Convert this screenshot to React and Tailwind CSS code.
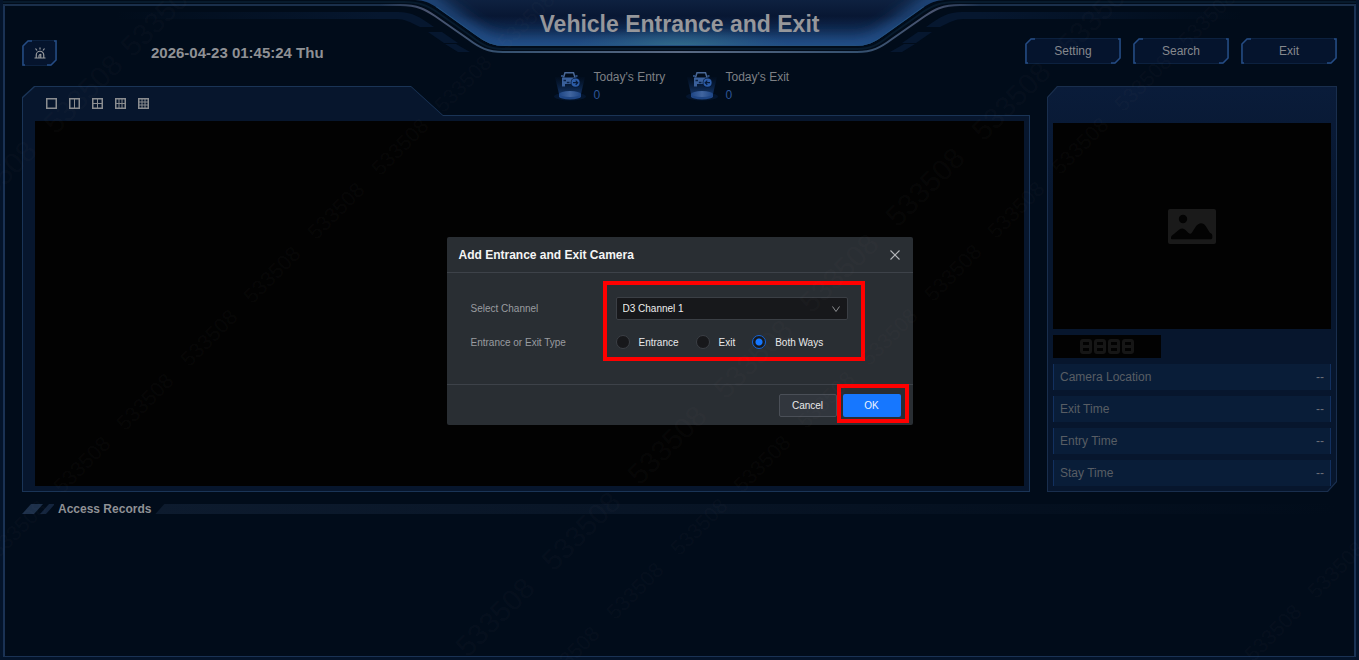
import React from "react";

const SMALL_MARKS = [
  [18, 529], [82, 465], [145, 402], [209, 338], [272, 275], [336, 211], [400, 147], [463, 84], [526, 21],
  [571, 655], [635, 591], [699, 527], [762, 464], [826, 400], [889, 337], [953, 273], [1016, 210], [1080, 146], [1143, 83], [1207, 19],
  [1273, 633], [1336, 570],
];
const LARGE_MARKS = [
  [-3, 180], [83, 94], [160, 17],
  [495, 617], [581, 531], [667, 445], [753, 359], [839, 273], [925, 187], [1011, 101], [1097, 15],
];

function Watermark() {
  return (
    <svg
      aria-hidden="true"
      className="pointer-events-none absolute inset-0 z-30 h-full w-full"
      viewBox="0 0 1359 660"
      preserveAspectRatio="xMidYMid slice"
      fill="#8a8a8a"
      fillOpacity="0.05"
      fontFamily="Liberation Sans, Arial, sans-serif"
      textAnchor="middle"
    >
      {SMALL_MARKS.map(([x, y]) => (
        <text key={`${x}-${y}`} fontSize="21" dy="7" transform={`translate(${x} ${y}) rotate(-45)`}>533508</text>
      ))}
      {LARGE_MARKS.map(([x, y]) => (
        <text key={`${x}-${y}`} fontSize="29" dy="10" transform={`translate(${x} ${y}) rotate(-45)`}>533508</text>
      ))}
    </svg>
  );
}

const GLOW_PATH =
  "M415 0C424 0 430 3 436 7L474 34C486 43 494 46 505 46H855C866 46 874 43 886 34L924 7C930 3 936 0 945 0Z";
const DASHES = (
  <g fill="#06172f">
    <path d="M380 12H398C412 12 420 17 434 27H420C410 22 405 19 396 19H380Z" />
    <path d="M428 32H442L458 43H444Z" />
    <path d="M445 44H456L470 52H458Z" />
  </g>
);

function HeaderBackdrop() {
  return (
    <div aria-hidden="true" className="absolute inset-x-0 top-0 flex">
      <div className="flex-1 pt-px pl-[3px]">
        <div className="h-[2px] bg-[#071a2c]" />
        <div className="mt-px h-[2px] bg-[#1a2f4b]" />
        <div className="mt-[6px] h-[7px] bg-linear-to-r from-transparent from-30% to-[#06172f]" />
      </div>
      <svg className="h-[60px] w-[600px] shrink-0" viewBox="380 0 600 60">
        <defs>
          <clipPath id="plate"><path d={GLOW_PATH} /></clipPath>
          <linearGradient id="plateFill" x1="0" y1="0" x2="0" y2="1">
            <stop offset="0" stopColor="#0e2140" />
            <stop offset="0.35" stopColor="#081733" />
            <stop offset="1" stopColor="#163a6c" />
          </linearGradient>
          <radialGradient id="teal">
            <stop offset="0" stopColor="#34708a" />
            <stop offset="1" stopColor="#2a5d80" stopOpacity="0" />
          </radialGradient>
          <linearGradient id="rim" x1="380" x2="980" y1="0" y2="0" gradientUnits="userSpaceOnUse">
            <stop offset="0" stopColor="#1a2f4b" />
            <stop offset="0.08" stopColor="#4a5470" />
            <stop offset="0.2" stopColor="#34506f" />
            <stop offset="0.5" stopColor="#5a6a83" />
            <stop offset="0.8" stopColor="#34506f" />
            <stop offset="0.92" stopColor="#4a5470" />
            <stop offset="1" stopColor="#1a2f4b" />
          </linearGradient>
          <filter id="soft" x="-20%" y="-60%" width="140%" height="220%"><feGaussianBlur stdDeviation="8" /></filter>
        </defs>
        <path d={GLOW_PATH} fill="url(#plateFill)" />
        <g clipPath="url(#plate)">
          <path d="M400 -8L424 -2L474 34C486 43 494 46 505 46H855C866 46 874 43 886 34L936 -2L960 -8" fill="none" stroke="#2c5d9e" strokeOpacity="0.85" strokeWidth="14" filter="url(#soft)" />
          <ellipse cx="680" cy="48" rx="110" ry="22" fill="url(#teal)" />
          <path d="M436 7L474 34C486 43 494 46 505 46H855C866 46 874 43 886 34L924 7" fill="none" stroke="#24507f" strokeWidth="2" />
        </g>
        <path d="M380 2H404C420 2 428 6 437 12L471 36C482 45 490 49 503 49H857C870 49 878 45 889 36L923 12C932 6 940 2 956 2H980" fill="none" stroke="#071a2c" strokeWidth="2" />
        <path d="M380 5H400C418 5 426 10 435 16L468 39C480 48 488 52 503 52H857C872 52 880 48 892 39L925 16C934 10 942 5 960 5H980" fill="none" stroke="url(#rim)" strokeWidth="2" />
        {DASHES}
        <g transform="translate(1360 0) scale(-1 1)">{DASHES}</g>
      </svg>
      <div className="flex-1 pt-px pr-[3px]">
        <div className="h-[2px] bg-[#071a2c]" />
        <div className="mt-px h-[2px] bg-[#1a2f4b]" />
        <div className="mt-[6px] h-[7px] bg-linear-to-l from-transparent from-30% to-[#06172f]" />
      </div>
    </div>
  );
}

function ChamferFrame({ w }) {
  return (
    <svg aria-hidden="true" className="absolute inset-0 h-full w-full" viewBox={`0 0 ${w} 26`} fill="none">
      <path d={`M6.5 .5H${w - 0.5}V20L${w - 6} 25.5H.5V6Z`} fill="#05142d" stroke="#0c213f" />
      <path d={`M10 1H6L1 6V25H3M${w - 3} 1H${w - 1}V20L${w - 6} 25H${w - 10}`} stroke="#254c84" strokeWidth="1.5" />
    </svg>
  );
}

function TopButton({ children }) {
  return (
    <button type="button" className="relative h-[26px] w-24 text-xs text-[#85888d]">
      <ChamferFrame w={96} />
      <span className="relative">{children}</span>
    </button>
  );
}

function SirenIcon() {
  return (
    <svg aria-hidden="true" className="relative h-3 w-3" viewBox="0 0 24 24" fill="none" stroke="#999b9e" strokeWidth="2.4">
      <path d="M1 22H23M4.5 21V16A7.5 7.5 0 0 1 19.5 16V21M10 21V18A3 3 0 0 1 13.5 15V21M12 1V5M3 3L6 7M21 3L18 7" />
    </svg>
  );
}

function StatIcon({ out }) {
  const id = out ? "out" : "in";
  return (
    <svg aria-hidden="true" className="h-9 w-8 shrink-0" viewBox="0 0 32 36">
      <defs>
        <linearGradient id={`beam-${id}`} x1="0" y1="0" x2="0" y2="1">
          <stop offset="0" stopColor="#0e2d5c" stopOpacity="0.05" />
          <stop offset="1" stopColor="#1b4587" stopOpacity="0.7" />
        </linearGradient>
        <linearGradient id={`disc-${id}`} x1="0" x2="1">
          <stop offset="0" stopColor="#1d4585" />
          <stop offset="0.5" stopColor="#41659f" />
          <stop offset="1" stopColor="#1d4585" />
        </linearGradient>
      </defs>
      <ellipse cx="16" cy="30.5" rx="16" ry="4" fill="#04152e" />
      <path d="M1 11H31L27 28H5Z" fill={`url(#beam-${id})`} />
      <path d="M5 28V30.5A11 3 0 0 0 27 30.5V28Z" fill="#1f4685" />
      <ellipse cx="16" cy="28" rx="11" ry="3" fill={`url(#disc-${id})`} />
      <path d="M9.5 11.5L11 6.8H19.5L21 11.5" fill="none" stroke="#4a6896" strokeWidth="1.5" />
      <path d="M7 10H9M21.5 10H23.5" stroke="#3a609b" strokeWidth="1.5" />
      <path d="M8 11.5H22.5V13A5 5 0 0 0 17 18H11V20.5H8Z" fill="#3a609b" />
      <path d="M9.5 14.5H12M12.8 16.5H15.5" stroke="#0a2145" strokeWidth="1.3" />
      <circle cx="21.5" cy="16.7" r="4.9" fill="#071a38" />
      <circle cx="21.5" cy="16.7" r="4.1" fill="#2d5da8" />
      <path
        d={out ? "M24 16.7H19.5M21.3 14.6L19.2 16.7L21.3 18.8" : "M19 16.7H23.5M21.7 14.6L23.8 16.7L21.7 18.8"}
        fill="none"
        stroke="#071a38"
        strokeWidth="1.2"
      />
    </svg>
  );
}

function Stat({ label, value, out }) {
  return (
    <div className="flex w-[132px] gap-[7px] pl-[7px]">
      <StatIcon out={out} />
      <dl className="pt-0.5 text-xs leading-[18px] whitespace-nowrap">
        <dt className="text-[#7d8085]">{label}</dt>
        <dd className="text-[#2d5596]">{value}</dd>
      </dl>
    </div>
  );
}

const LAYOUTS = [
  ["1 window", ""],
  ["2 windows", "M5.5 1V10"],
  ["4 windows", "M5.5 1V10M1 5.5H10"],
  ["6 windows", "M4 1V10M7 1V10M1 5.5H10"],
  ["9 windows", "M4 1V10M7 1V10M1 4H10M1 7H10"],
];

function LivePanel() {
  return (
    <section
      aria-label="Live view"
      className="flex min-w-0 flex-1 bg-[#1a3456] p-px [clip-path:polygon(12px_0,389px_0,421px_29px,100%_29px,100%_100%,0_100%,0_11px)]"
    >
      <div className="flex flex-1 flex-col bg-[#07162d] pr-[5px] pb-[5px] pl-3 [clip-path:polygon(12px_0,388px_0,420px_29px,100%_29px,100%_100%,0_100%,0_11px)]">
        <div className="flex h-[34px] items-center gap-3 pb-0.5 pl-[11px]">
          {LAYOUTS.map(([name, d]) => (
            <button key={name} type="button" aria-label={name} className="h-[11px] w-[11px]">
              <svg aria-hidden="true" className="h-[11px] w-[11px]" viewBox="0 0 11 11" fill="none" stroke="#8b8d90">
                <rect x=".75" y=".75" width="9.5" height="9.5" strokeWidth="1.5" />
                <path d={d} />
              </svg>
            </button>
          ))}
        </div>
        <div className="flex-1 bg-[#020202]" />
      </div>
    </section>
  );
}

function LedDigit() {
  return (
    <span className="flex w-3 flex-col">
      <span className="h-[9px] rounded-t-[3px] border-[3px] border-[#161616]" />
      <span className="-mt-[3px] h-[9px] rounded-b-[3px] border-[3px] border-[#161616]" />
    </span>
  );
}

function InfoPanel() {
  return (
    <section
      aria-label="Vehicle details"
      className="w-[290px] shrink-0 bg-[#192e4d] p-px [clip-path:polygon(10px_0,100%_0,100%_calc(100%-10px),calc(100%-9px)_100%,0_100%,0_11px)]"
    >
      <div className="h-full bg-[#07162d] bg-linear-to-b from-[#0a1c3a] to-[#07162d] to-30% px-[5px] pt-9 pb-[5px] [clip-path:polygon(10px_0,100%_0,100%_calc(100%-10px),calc(100%-9px)_100%,0_100%,0_11px)]">
        <div className="flex h-[206px] items-center justify-center bg-[#020202]">
          <svg role="img" aria-label="No picture" className="h-[35px] w-[48px]" viewBox="0 0 48 35">
            <rect width="48" height="35" rx="2" fill="#1a1a1a" />
            <circle cx="15" cy="10" r="4.2" fill="#030303" />
            <path d="M3 30V28.5C3 27.5 4 26.5 5 25.8L11 20.8C13.5 19 15.5 19 17.5 21L20.5 24C21.8 25.3 23 25 24 23.5L27.5 18C31 13.2 35 13.2 38 17.5L41.5 23.2C42.3 24.4 44.3 24.5 44.3 26.5V28.5C44.3 29.7 43.7 30.3 42.5 30.3H4Z" fill="#030303" />
          </svg>
        </div>
        <div role="img" aria-label="Plate number" className="mt-1.5 flex h-[23px] w-[108px] items-center justify-center gap-0.5 bg-[#020202]">
          <LedDigit />
          <LedDigit />
          <LedDigit />
          <LedDigit />
        </div>
        <dl className="mt-1.5 flex flex-col gap-1.5 text-xs text-[#585d64]">
          {["Camera Location", "Exit Time", "Entry Time", "Stay Time"].map((label) => (
            <div key={label} className="flex h-[26px] items-center justify-between border-x border-[#12305f] bg-[#091d38] px-1.5">
              <dt>{label}</dt>
              <dd className="text-[#6a6f77]">--</dd>
            </div>
          ))}
        </dl>
      </div>
    </section>
  );
}

function AccessRecords() {
  return (
    <section className="flex-1">
      <div className="flex h-[18px] items-center">
        <svg aria-hidden="true" className="h-2.5 w-8 shrink-0" viewBox="0 0 32 10">
          <path d="M9 0H21L12 10H0Z" fill="#1d304a" />
          <path d="M27 0H33L24 10H18Z" fill="#14253e" />
        </svg>
        <h2 className="px-1 text-xs font-bold whitespace-nowrap text-[#8f9195]">Access Records</h2>
        <div className="h-2.5 flex-1 bg-linear-to-r from-[#0d1b2e] to-transparent [clip-path:polygon(9px_0,100%_0,100%_100%,0_100%)]" />
      </div>
    </section>
  );
}

function Radio({ label, defaultChecked }) {
  return (
    <label className="flex items-center gap-[9px] text-[#e9eaeb]">
      <input
        type="radio"
        name="direction"
        defaultChecked={defaultChecked}
        className="h-[14px] w-[14px] appearance-none rounded-full border border-[#3b3f45] bg-[#17181b] checked:border-[#1565d8] checked:bg-[radial-gradient(circle,#1677ff_3px,#17181b_4px)]"
      />
      {label}
    </label>
  );
}

function CameraDialog() {
  return (
    <div className="absolute inset-0 z-20 flex items-center justify-center pt-0.5">
      <form
        role="dialog"
        aria-labelledby="dialog-title"
        onSubmit={(e) => e.preventDefault()}
        className="w-[466px] rounded-xs bg-[#292e33] text-[10px]"
      >
        <div className="flex h-9 items-center justify-between border-b border-[#3d4249] px-3">
          <h2 id="dialog-title" className="text-xs font-bold text-[#f5f5f5]">Add Entrance and Exit Camera</h2>
          <button type="button" aria-label="Close" className="h-3 w-3">
            <svg aria-hidden="true" className="h-3 w-3" viewBox="0 0 12 12" stroke="#b4b6b9" strokeWidth="1.1">
              <path d="M1.5 1.5L10.5 10.5M10.5 1.5L1.5 10.5" />
            </svg>
          </button>
        </div>
        <div className="relative grid grid-cols-[145px_232px] gap-y-3 px-6 pt-6 pb-8">
          <label htmlFor="channel" className="self-center text-[#999ca0]">Select Channel</label>
          <div className="relative">
            <select id="channel" className="block h-[23px] w-full appearance-none rounded-xs border border-[#3b3f45] bg-[#17181b] px-1.5 text-[#eeeeee]">
              <option>D3 Channel 1</option>
            </select>
            <svg aria-hidden="true" className="pointer-events-none absolute top-2 right-2 h-2 w-2" viewBox="0 0 8 8" fill="none" stroke="#8c8e91">
              <path d="M.5 1.5L4 6.5L7.5 1.5" />
            </svg>
          </div>
          <span id="type-label" className="self-center text-[#999ca0]">Entrance or Exit Type</span>
          <div role="radiogroup" aria-labelledby="type-label" className="flex h-5 items-center gap-[17px] whitespace-nowrap">
            <Radio label="Entrance" />
            <Radio label="Exit" />
            <Radio label="Both Ways" defaultChecked />
          </div>
          <div aria-hidden="true" className="pointer-events-none absolute top-2 left-[156px] h-20 w-[262px] border-4 border-[#ff0000]" />
        </div>
        <div className="flex h-[41px] items-center justify-end gap-1.5 border-t border-[#3d4249] px-3">
          <button type="button" className="h-[23px] w-[58px] rounded-xs border border-[#4a4f57] bg-[#31363d] text-[#e9eaeb]">Cancel</button>
          <div className="relative">
            <button type="submit" className="block h-[23px] w-[58px] rounded-xs bg-[#1677ff] text-[#eef4ff]">OK</button>
            <div aria-hidden="true" className="pointer-events-none absolute -top-2.5 -right-2 -bottom-1.5 -left-1.5 border-4 border-[#ff0000]" />
          </div>
        </div>
      </form>
    </div>
  );
}

export default function App() {
  return (
    <div className="relative flex min-h-screen min-w-[1200px] flex-col overflow-hidden bg-[#010c1a] font-['Liberation_Sans',Arial,sans-serif]">
      <div aria-hidden="true" className="pointer-events-none absolute inset-0 border-x-3 border-b-3 border-[#04142a]">
        <div className="h-full pt-1">
          <div className="h-full border-x-2 border-b border-[#1a3254]" />
        </div>
      </div>
      <HeaderBackdrop />

      <header className="relative grid grid-cols-[1fr_auto_1fr] px-[22px]">
        <div className="flex h-[66px] items-end gap-[94px]">
          <button type="button" aria-label="Alarm" className="relative flex h-[26px] w-[35px] items-center justify-center">
            <ChamferFrame w={35} />
            <SirenIcon />
          </button>
          <time className="text-[15px] leading-[26px] font-bold whitespace-nowrap text-[#8f9195]">2026-04-23 01:45:24 Thu</time>
        </div>
        <div>
          <h1 className="h-[66px] pt-2 text-center text-[23px] leading-[32px] font-bold whitespace-nowrap text-[#96979b]">Vehicle Entrance and Exit</h1>
          <div className="flex h-5 justify-center">
            <Stat label="Today's Entry" value="0" />
            <Stat label="Today's Exit" value="0" out />
          </div>
        </div>
        <nav className="flex justify-end gap-3 pt-[38px]">
          <TopButton>Setting</TopButton>
          <TopButton>Search</TopButton>
          <TopButton>Exit</TopButton>
        </nav>
      </header>

      <main className="flex flex-1 flex-col gap-2 px-[22px]">
        <div className="flex gap-[17px]">
          <LivePanel />
          <InfoPanel />
        </div>
        <AccessRecords />
      </main>

      <CameraDialog />
      <Watermark />
    </div>
  );
}
